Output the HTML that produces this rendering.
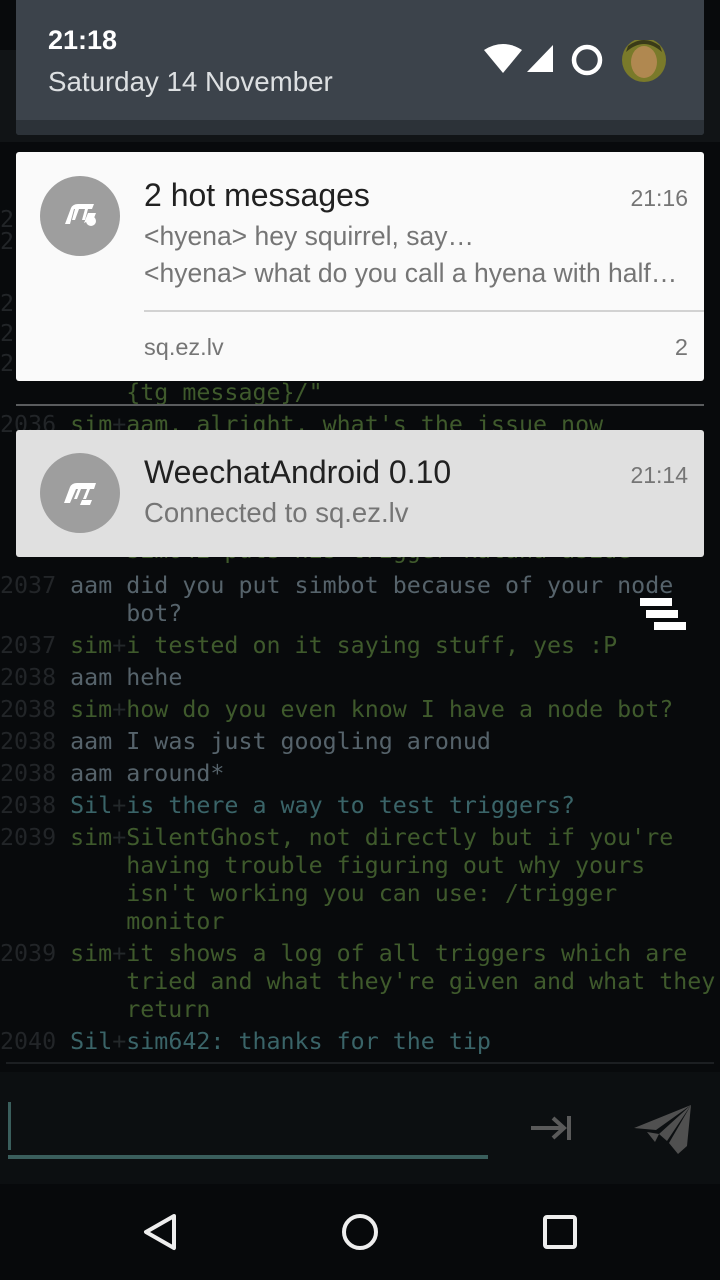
<!DOCTYPE html>
<html><head><meta charset="utf-8"><style>
*{margin:0;padding:0;box-sizing:border-box}
body{width:720px;height:1280px;background:#080a0c;position:relative;overflow:hidden;font-family:"Liberation Sans",sans-serif}
.l{position:absolute;left:0;height:28px;line-height:28px;font-family:"DejaVu Sans Mono","Liberation Mono",monospace;font-size:23.3px;white-space:pre;color:#3f5a2c}
.n{color:#222528}.a{color:#56636b}.g{color:#3f5a2c}.t{color:#3a6468}.p{color:#23282a}
.card{position:absolute;left:16px;width:688px;border-radius:3px}
.ic{position:absolute;left:24px;width:80px;height:80px;border-radius:50%;background:#9e9e9e}
.ab{position:absolute;white-space:nowrap}
</style></head><body>
<div style="position:absolute;left:0;top:50px;width:720px;height:92px;background:#111416"></div>
<div style="position:absolute;left:16px;top:0;width:688px;height:135px;background:#3c434b;border-radius:0 0 3px 3px"></div>
<div style="position:absolute;left:16px;top:120px;width:688px;height:15px;background:#2c3238;border-radius:0 0 3px 3px"></div>
<div class="ab" style="left:48px;top:25px;font-size:27px;color:#fff;font-weight:bold">21:18</div>
<div class="ab" style="left:48px;top:66px;font-size:27.7px;color:#dde0e2">Saturday 14 November</div>
<svg style="position:absolute;left:480px;top:40px" width="200" height="44">
<path d="M4 10 Q23 -2 42 10 L23 33 Z" fill="#fff"/>
<path d="M47 32 L73 5 L73 32 Z" fill="#fff"/>
<circle cx="107" cy="20" r="13" fill="none" stroke="#fff" stroke-width="4.5"/>
<circle cx="164" cy="20" r="22" fill="#7a7a2a"/>
<ellipse cx="164" cy="22" rx="13" ry="16" fill="#b08850"/>
<path d="M146 12 Q164 -4 182 12 L180 6 Q164 -6 148 6Z" fill="#3a3a18"/>
</svg>
<div class="l" style="top:206px"><span class="n">2</span></div>
<div class="l" style="top:228px"><span class="n">2</span></div>
<div class="l" style="top:290px"><span class="n">2</span></div>
<div class="l" style="top:320px"><span class="n">2</span></div>
<div class="l" style="top:350px"><span class="n">2</span></div>
<div class="l" style="top:379px">         {tg_message}/"</div>
<div style="position:absolute;left:16px;top:404px;width:688px;height:2px;background:#5a5c5e"></div>
<div class="l" style="top:411px"><span class="n">2036</span> <span class="g">sim</span><span class="p">+</span><span class="g">aam, alright, what's the issue now</span></div>
<div class="l" style="top:537px">         sim642 puts his trigger katana aside</div>
<div class="l" style="top:572px"><span class="n">2037</span> <span class="a">aam did you put simbot because of your node</span></div>
<div class="l" style="top:600px"><span class="a">         bot?</span></div>
<div class="l" style="top:632px"><span class="n">2037</span> sim<span class="p">+</span>i tested on it saying stuff, yes :P</div>
<div class="l" style="top:664px"><span class="n">2038</span> <span class="a">aam hehe</span></div>
<div class="l" style="top:696px"><span class="n">2038</span> sim<span class="p">+</span>how do you even know I have a node bot?</div>
<div class="l" style="top:728px"><span class="n">2038</span> <span class="a">aam I was just googling aronud</span></div>
<div class="l" style="top:760px"><span class="n">2038</span> <span class="a">aam around*</span></div>
<div class="l" style="top:792px"><span class="n">2038</span> <span class="t">Sil</span><span class="p">+</span><span class="t">is there a way to test triggers?</span></div>
<div class="l" style="top:824px"><span class="n">2039</span> sim<span class="p">+</span>SilentGhost, not directly but if you're</div>
<div class="l" style="top:852px">         having trouble figuring out why yours</div>
<div class="l" style="top:880px">         isn't working you can use: /trigger</div>
<div class="l" style="top:908px">         monitor</div>
<div class="l" style="top:940px"><span class="n">2039</span> sim<span class="p">+</span>it shows a log of all triggers which are</div>
<div class="l" style="top:968px">         tried and what they're given and what they</div>
<div class="l" style="top:996px">         return</div>
<div class="l" style="top:1028px"><span class="n">2040</span> <span class="t">Sil</span><span class="p">+</span><span class="t">sim642: thanks for the tip</span></div>
<div style="position:absolute;left:6px;top:1062px;width:708px;height:2px;background:#1c1f22"></div>
<div style="position:absolute;left:640px;top:598px;width:32px;height:8px;background:#fff"></div>
<div style="position:absolute;left:646px;top:610px;width:32px;height:8px;background:#fff"></div>
<div style="position:absolute;left:654px;top:622px;width:32px;height:8px;background:#fff"></div>
<div class="card" style="top:152px;height:229px;background:#fafafa">
<div class="ic" style="top:24px"><svg width="80" height="80"><path d="M25 48 L31 32 Q33 28 38 28 L54 28 L52 33 L48 33 L45 44 L42 44 L45 33 L39 33 L35 44 L32 44 L35 33 L34 33 L30 48Z M44 47 L48 37 L56 37 L54 42 Z" fill="#fff"/><circle cx="51" cy="45" r="5" fill="#fff"/></svg></div>
<div class="ab" style="left:128px;top:25px;font-size:32px;color:#212121">2 hot messages</div>
<div class="ab" style="right:16px;top:33px;font-size:23px;color:#757575">21:16</div>
<div class="ab" style="left:128px;top:69px;font-size:26.5px;color:#757575">&lt;hyena&gt; hey squirrel, say…</div>
<div class="ab" style="left:128px;top:106px;font-size:26.5px;color:#757575">&lt;hyena&gt; what do you call a hyena with half…</div>
<div style="position:absolute;left:128px;top:158px;width:560px;height:2px;background:#d2d2d2"></div>
<div class="ab" style="left:128px;top:182px;font-size:23.5px;color:#757575">sq.ez.lv</div>
<div class="ab" style="right:16px;top:182px;font-size:23.5px;color:#757575">2</div>
</div>
<div class="card" style="top:430px;height:127px;background:#e0e0e0">
<div class="ic" style="top:23px"><svg width="80" height="80"><path d="M24 50 L30 34 Q32 30 37 30 L56 30 L54 36 L50 36 L46 46 L43 46 L47 36 L41 36 L37 46 L34 46 L38 36 L36 36 L30 50 Z M40 52 L42 47 L52 47 L50 52Z" fill="#fff"/></svg></div>
<div class="ab" style="left:128px;top:24px;font-size:32px;color:#212121">WeechatAndroid 0.10</div>
<div class="ab" style="right:16px;top:32px;font-size:23px;color:#757575">21:14</div>
<div class="ab" style="left:128px;top:67px;font-size:27.5px;color:#757575">Connected to sq.ez.lv</div>
</div>
<div style="position:absolute;left:0;top:1072px;width:720px;height:112px;background:#0c0f11"></div>
<div style="position:absolute;left:8px;top:1102px;width:3px;height:48px;background:#3a5e5c"></div>
<div style="position:absolute;left:8px;top:1155px;width:480px;height:4px;background:#3a5e5c"></div>
<svg style="position:absolute;left:525px;top:1100px" width="180" height="60">
<path d="M6 28 L38 28 M28 18 L39 28 L28 38" stroke="#5a5a5a" stroke-width="4" fill="none"/>
<rect x="42" y="16" width="4" height="24" fill="#5a5a5a"/>
<path d="M109 28 L166 5 L131 30 Z M166 5 L134 34 L142 41 Z M166 5 L144 43 L153 54 L162 46 Z M122 32 L134 34 L130 42 Z" fill="#505050"/>
</svg>
<div style="position:absolute;left:0;top:1184px;width:720px;height:96px;background:#07090b"></div>
<svg style="position:absolute;left:0;top:1184px" width="720" height="96">
<path d="M174 32 L146 48 L174 64 Z" fill="none" stroke="#eee" stroke-width="4" stroke-linejoin="round"/>
<ellipse cx="360" cy="48" rx="16" ry="16" fill="none" stroke="#eee" stroke-width="4"/>
<rect x="545" y="33" width="30" height="30" rx="2" fill="none" stroke="#eee" stroke-width="4"/>
</svg>
</body></html>
